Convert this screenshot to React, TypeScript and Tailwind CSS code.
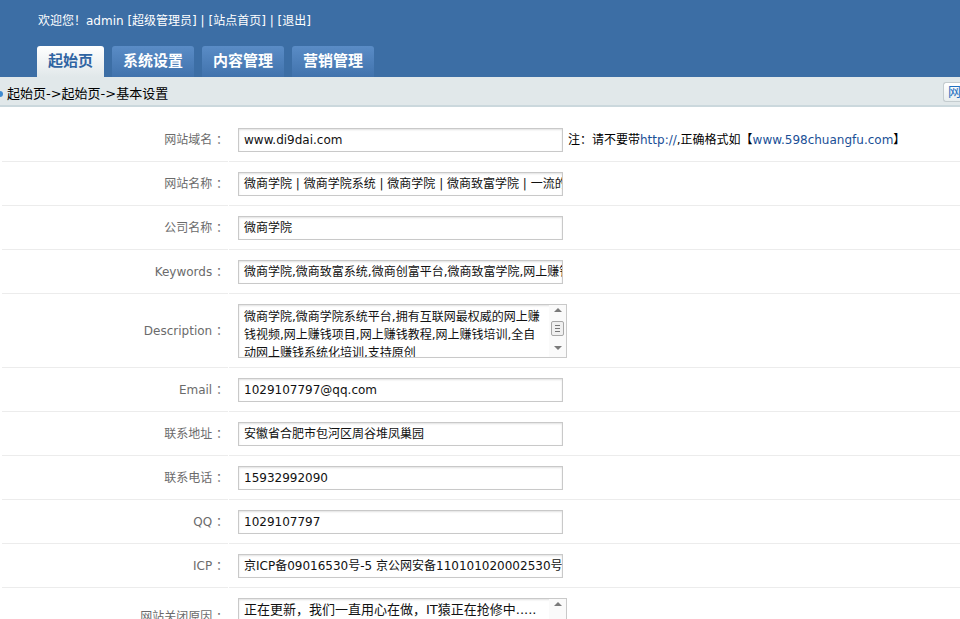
import type { ReactNode } from 'react';

const cjk = "font-['DejaVu_Sans','Noto_Sans_CJK_SC',sans-serif]";

function Scrollbar({ full }: { full: boolean }) {
  return (
    <div className="flex w-[17px] shrink-0 flex-col items-center bg-[#fafafa] pt-[3px]">
      <div className="h-0 w-0 border-x-[4px] border-b-[4px] border-x-transparent border-b-[#7a7a7a]" />
      {full && (
        <>
          <div className="mt-[9px] flex h-[15px] w-[13px] flex-col justify-center gap-[2px] rounded-[2px] border border-[#a8a8a8] bg-[#f0f0f0] px-[3px]">
            <div className="h-px bg-[#777]" />
            <div className="h-px bg-[#777]" />
            <div className="h-px bg-[#777]" />
          </div>
          <div className="mt-[10px] h-0 w-0 border-x-[4px] border-t-[4px] border-x-transparent border-t-[#7a7a7a]" />
        </>
      )}
    </div>
  );
}

function Row({ label, children, tall }: { label: string; children: ReactNode; tall?: boolean }) {
  return (
    <div className={`flex ${tall ? 'h-[74px]' : 'h-[44px]'}`}>
      <div className="flex w-[226px] shrink-0 items-center justify-end border-b border-[#ececec] text-[12px] text-[#6b6b6b]">
        {label}
      </div>
      <div className="ml-px flex flex-1 items-center border-b border-[#ececec] pl-[9px]">{children}</div>
    </div>
  );
}

function Field({ value }: { value: ReactNode }) {
  return (
    <div className="flex h-[24px] w-[325px] items-center overflow-hidden whitespace-nowrap border border-[#c9c9c9] pl-[5px] text-[12px] text-[#111] shadow-[inset_0_1px_2px_rgba(0,0,0,0.12)]">
      {value}
    </div>
  );
}

export default function App() {
  const tabs = ['系统设置', '内容管理', '营销管理'];
  return (
    <div className={`h-[619px] overflow-hidden bg-white ${cjk}`}>
      <div className="h-[77px] bg-[#3c6ea5]">
        <div className="pl-[38px] pt-[12px] text-[12px] leading-[18px] text-white">
          欢迎您！admin [超级管理员] | [站点首页] | [退出]
        </div>
        <div className="mt-[16px] flex gap-[8px] pl-[37px]">
          <div className="flex h-[31px] w-[67px] items-center justify-center rounded-t-[3px] bg-gradient-to-b from-white to-[#e1e8ea] text-[15px] font-bold text-[#2f64a2]">
            起始页
          </div>
          {tabs.map((t) => (
            <div
              key={t}
              className="flex h-[31px] w-[82px] items-center justify-center rounded-t-[3px] bg-gradient-to-b from-[#5a8cc6] to-[#4173ad] text-[15px] font-bold text-white"
            >
              {t}
            </div>
          ))}
        </div>
      </div>

      <div className="flex h-[30px] items-center justify-between border-b-2 border-[#cbd8dd] bg-[#e1e8ea]">
        <div className="flex items-center pt-[5px] text-[13px] text-black">
          <span className="mr-[4px] h-[6px] w-[3px] rounded-r-sm bg-[#3d8ad0]" />
          起始页-&gt;起始页-&gt;基本设置
        </div>
        <div className="mt-[2px] flex h-[20px] w-[17px] items-center overflow-hidden rounded-l-[3px] border border-r-0 border-[#c4cccf] bg-gradient-to-b from-white to-[#e8eeef] pl-[4px] text-[13px] text-[#1f6fc0]">
          网
        </div>
      </div>

      <div className="mt-[11px] pl-[2px]">
        <div className="flex h-[44px]">
          <div className="flex w-[226px] shrink-0 items-center justify-end border-b border-[#ececec] text-[12px] text-[#6b6b6b]">
            网站域名 ：
          </div>
          <div className="ml-px flex flex-1 items-center whitespace-nowrap border-b border-[#ececec] pl-[9px]">
            <Field value="www.di9dai.com" />
            <span className="ml-[5px] text-[12px] text-black">
              注：请不要带<span className="text-[#1a4f96]">http://</span>,正确格式如【
              <span className="text-[#1a4f96]">www.598chuangfu.com</span>】
            </span>
          </div>
        </div>
        <Row label="网站名称 ：">
          <Field value="微商学院 | 微商学院系统 | 微商学院 | 微商致富学院 | 一流的网上赚钱培训平台" />
        </Row>
        <Row label="公司名称 ：">
          <Field value="微商学院" />
        </Row>
        <Row label="Keywords ：">
          <Field value="微商学院,微商致富系统,微商创富平台,微商致富学院,网上赚钱" />
        </Row>
        <Row label="Description ：" tall>
          <div className="flex h-[54px] w-[329px] overflow-hidden border border-[#c9c9c9] shadow-[inset_0_1px_2px_rgba(0,0,0,0.12)]">
            <div className="flex-1 whitespace-nowrap pl-[5px] pt-[3px] text-[12px] leading-[18px] text-[#111]">
              <div>微商学院,微商学院系统平台,拥有互联网最权威的网上赚</div>
              <div>钱视频,网上赚钱项目,网上赚钱教程,网上赚钱培训,全自</div>
              <div>动网上赚钱系统化培训,支持原创</div>
            </div>
            <Scrollbar full />
          </div>
        </Row>
        <Row label="Email ：">
          <Field value="1029107797@qq.com" />
        </Row>
        <Row label="联系地址 ：">
          <Field value="安徽省合肥市包河区周谷堆凤巢园" />
        </Row>
        <Row label="联系电话 ：">
          <Field value="15932992090" />
        </Row>
        <Row label="QQ ：">
          <Field value="1029107797" />
        </Row>
        <Row label="ICP ：">
          <Field value="京ICP备09016530号-5 京公网安备110101020002530号" />
        </Row>
        <div className="flex h-[74px]">
          <div className="flex w-[226px] shrink-0 items-start justify-end pt-[20px] text-[12px] text-[#6b6b6b]">
            网站关闭原因 ：
          </div>
          <div className="ml-px flex flex-1 items-start pl-[9px] pt-[10px]">
            <div className="flex h-[54px] w-[329px] overflow-hidden border border-[#c9c9c9] shadow-[inset_0_1px_2px_rgba(0,0,0,0.12)]">
              <div className="flex-1 pl-[5px] pt-[2px] text-[13px] leading-[18px] text-[#111]">
                正在更新，我们一直用心在做，IT猿正在抢修中.....
              </div>
              <Scrollbar full={false} />
            </div>
          </div>
        </div>
      </div>
    </div>
  );
}
